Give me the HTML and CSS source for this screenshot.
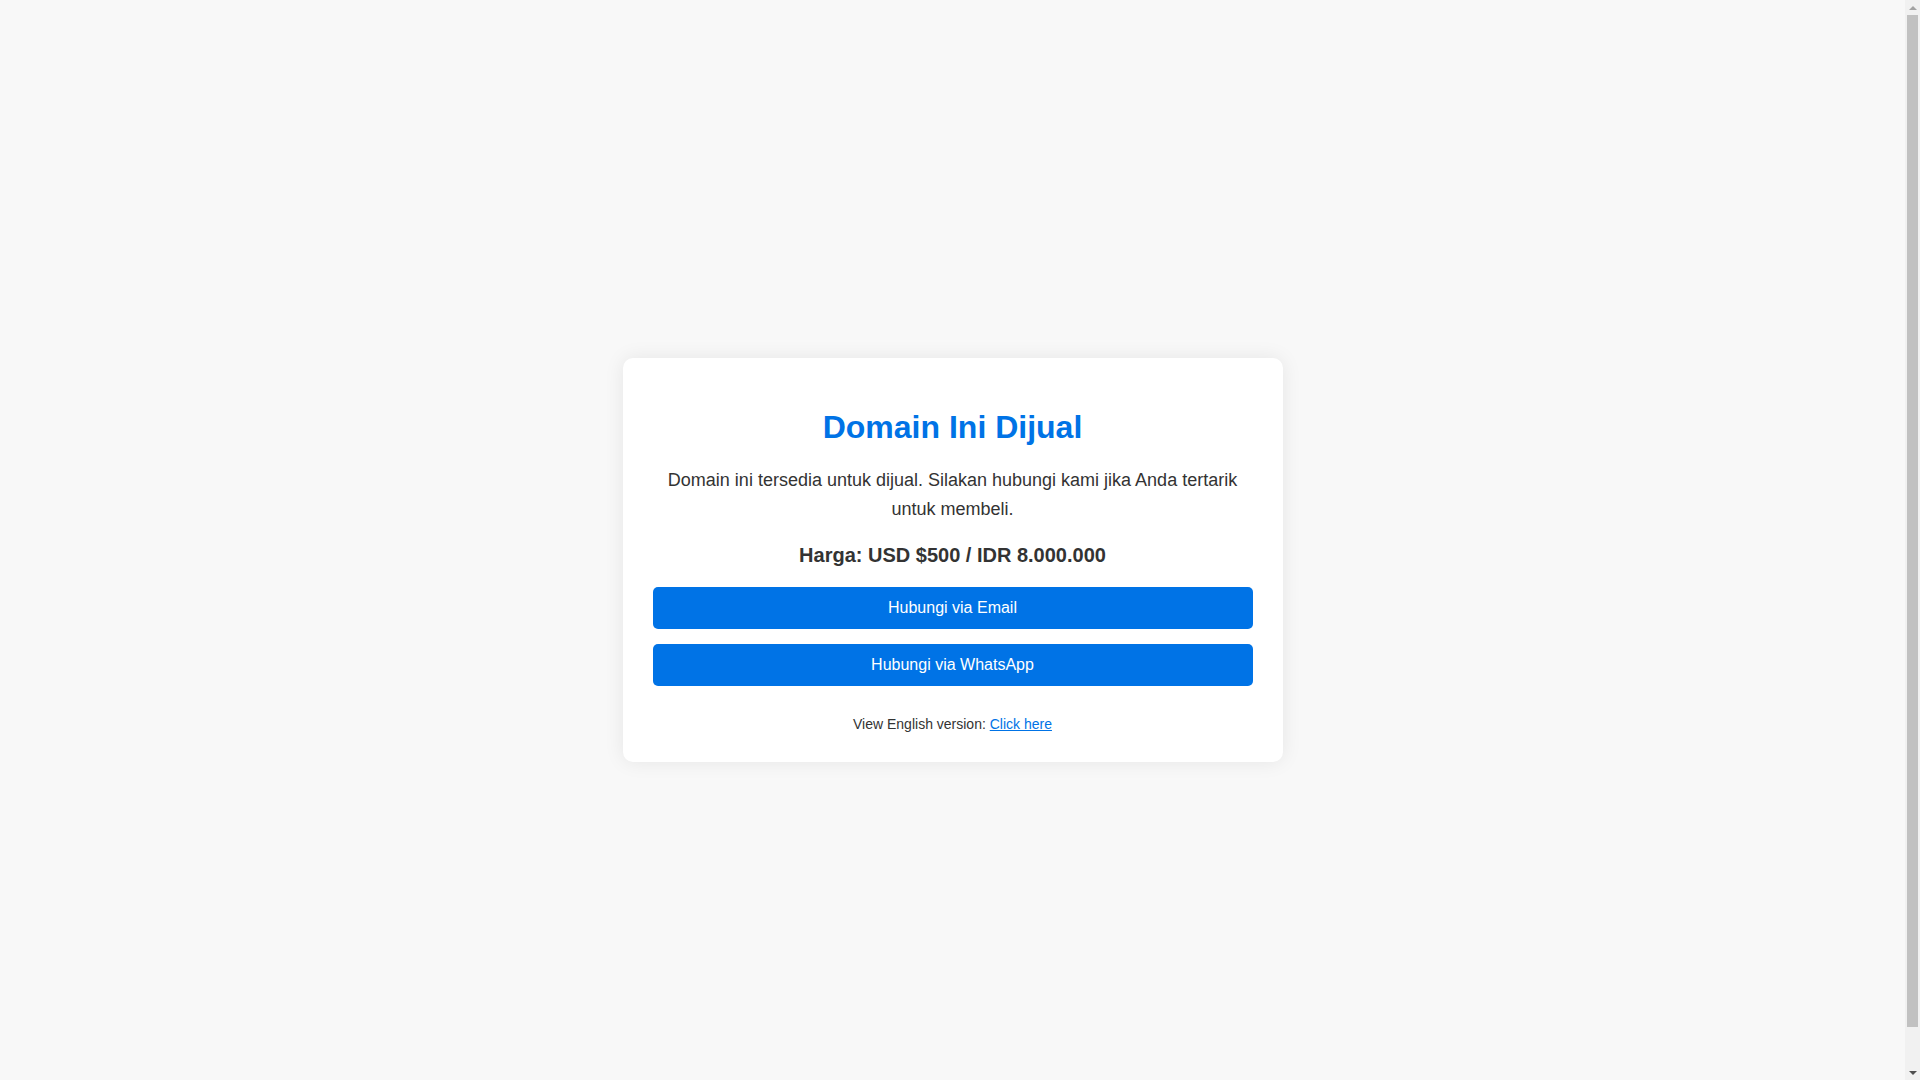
FILE: index.html
```html
<!DOCTYPE html>
<html lang="id">
<head>
<meta charset="utf-8">
<title>Domain Ini Dijual</title>
<link rel="stylesheet" href="styles.css">
</head>
<body>
<div class="card">
  <h1 class="title">Domain Ini Dijual</h1>
  <p class="desc">Domain ini tersedia untuk dijual. Silakan hubungi kami jika Anda tertarik untuk membeli.</p>
  <p class="price">Harga: USD $500 / IDR 8.000.000</p>
  <a class="btn" href="#">Hubungi via Email</a>
  <a class="btn" href="#">Hubungi via WhatsApp</a>
  <p class="lang">View English version: <a class="lang-link" href="#">Click here</a></p>
</div>
<div class="scrollbar" aria-hidden="true">
  <span class="sb-arrow sb-up"></span>
  <span class="sb-thumb"></span>
  <span class="sb-arrow sb-down"></span>
</div>
</body>
</html>
```
FILE: styles.css
```css
html {
  overflow: hidden;
}
body {
  margin: 0;
  padding: 20px 35px 20px 20px;
  min-height: 100vh;
  background: #f8f8f8;
  font-family: "Liberation Sans", Arial, sans-serif;
  color: #333;
  display: flex;
  align-items: center;
  justify-content: center;
}
.card {
  width: 600px;
  padding: 30px;
  background: #fff;
  border-radius: 10px;
  box-shadow: 0 0 20px rgba(0, 0, 0, 0.08);
  text-align: center;
}
.title {
  font-size: 32px;
  font-weight: bold;
  color: #0073e6;
  margin: 20.5px 0 20.5px;
  line-height: normal;
}
.desc {
  font-size: 18px;
  line-height: 1.6;
  margin: 18px 0 20px;
}
.price {
  font-size: 20px;
  font-weight: bold;
  line-height: normal;
  margin: 18px 0 20px;
}
.btn {
  display: block;
  background: #0073e6;
  color: #fff;
  text-decoration: none;
  font-size: 16px;
  line-height: 18px;
  padding: 12px 0;
  border-radius: 5px;
  margin-bottom: 15px;
}
.btn + .btn {
  margin-bottom: 0;
}
.lang {
  font-size: 14px;
  line-height: normal;
  margin: 30px 0 0;
}
.lang-link {
  color: #0073e6;
}
.scrollbar {
  position: fixed;
  top: 0;
  right: 0;
  width: 15px;
  height: 100vh;
  background: #f1f1f1;
  display: flex;
  flex-direction: column;
  align-items: center;
}
.sb-arrow {
  flex: 0 0 15px;
  width: 15px;
  display: flex;
  align-items: center;
  justify-content: center;
}
.sb-up::before {
  content: "";
  border-left: 4px solid transparent;
  border-right: 4px solid transparent;
  border-bottom: 4px solid #a3a3a3;
}
.sb-down::before {
  content: "";
  border-left: 4px solid transparent;
  border-right: 4px solid transparent;
  border-top: 4px solid #505050;
}
.sb-thumb {
  width: 11px;
  height: 1012px;
  background: #c1c1c1;
}
.sb-down {
  margin-top: auto;
}
```
